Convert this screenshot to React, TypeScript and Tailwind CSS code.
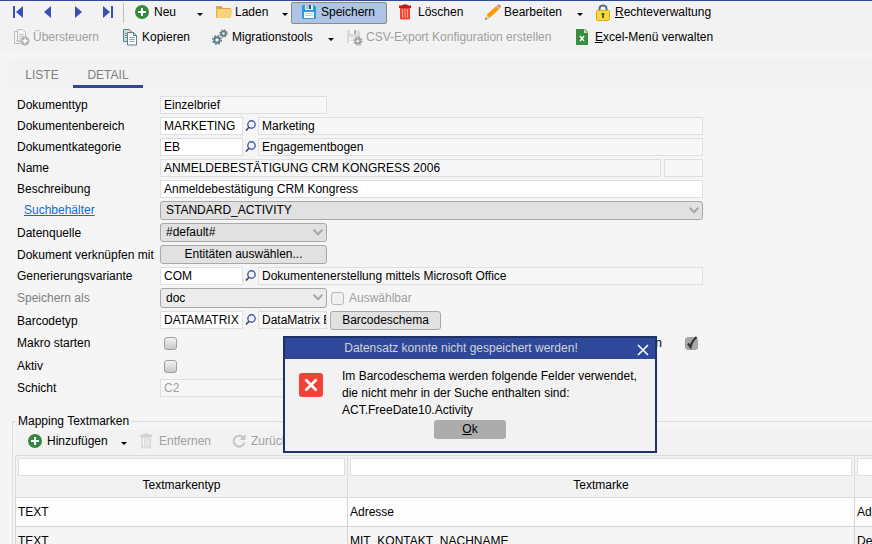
import React from 'react';

const NavIcon = ({ kind }: { kind: 'first' | 'prev' | 'next' | 'last' }) => (
  <svg width="12" height="12" viewBox="0 0 12 12" fill="#3a4fb8">
    {kind === 'first' && <path d="M1 0h2v12H1zM11 0v12L4 6z" />}
    {kind === 'prev' && <path d="M9 0v12L2 6z" />}
    {kind === 'next' && <path d="M3 0v12l7-6z" />}
    {kind === 'last' && <path d="M9 0h2v12H9zM1 0v12l7-6z" />}
  </svg>
);

const PlusIcon = () => (
  <svg width="16" height="16" viewBox="0 0 16 16">
    <circle cx="8" cy="8" r="7" fill="#338a3e" />
    <path d="M7 4h2v3h3v2H9v3H7V9H4V7h3z" fill="#fff" />
  </svg>
);

const FolderIcon = () => (
  <svg width="18" height="16" viewBox="0 0 18 16">
    <path d="M1 3a1 1 0 0 1 1-1h4l2 2h7a1 1 0 0 1 1 1v8H1z" fill="#e2a63c" />
    <path d="M1 14V6h1l1-1h13a1 1 0 0 1 1 1v1l-1 6a1 1 0 0 1-1 1z" fill="#f9d27c" />
    <path d="M1 14V4h1v9z" fill="#e5b04e" />
  </svg>
);

const FloppyIcon = () => (
  <svg width="16" height="16" viewBox="0 0 16 16">
    <path d="M1 2a1 1 0 0 1 1-1h11l2 2v11a1 1 0 0 1-1 1H2a1 1 0 0 1-1-1z" fill="#2f97dc" />
    <path d="M4 1h8v5H4z" fill="#e4eef2" />
    <path d="M5 1h5v4H5z" fill="#a9c2cf" />
    <path d="M8 1h2v4H8z" fill="#285e7c" />
    <path d="M3 8h10v6H3z" fill="#fff" />
    <path d="M4 9.500h8M4 11.500h8" stroke="#c4ccd0" />
  </svg>
);

const TrashIcon = ({ muted }: { muted?: boolean }) => (
  <svg width="14" height="16" viewBox="0 0 14 16">
    <path d="M1 1.500h3l1-1h4l1 1h3v2.500H1z" fill={muted ? '#d3d3d3' : '#b71c1c'} />
    <path d="M2 4h10v10.500a1 1 0 0 1-1 1H3a1 1 0 0 1-1-1z" fill={muted ? '#dcdcdc' : '#f44336'} />
    <path d="M4.500 5v8.500M7 5v8.500M9.500 5v8.500" stroke={muted ? '#f5f5f5' : '#ffab91'} />
  </svg>
);

const PencilIcon = () => (
  <svg width="18" height="17" viewBox="0 0 18 17">
    <path d="M1 16l1.500-4.500L5 14z" fill="#37474f" />
    <path d="M2 13l1-3 3 3.500-3.500 1.500z" fill="#ffd9a0" />
    <path d="M2.800 10.500L12 2.300l3 3L5.500 14z" fill="#ff9800" />
    <path d="M12 2.300l1.300-1.100 3 3L15 5.300z" fill="#b0bec5" />
    <path d="M13.300 1.200c1-1 2-.9 2.800-.1s1 2 .2 3.100z" fill="#e57373" />
  </svg>
);

const LockIcon = () => (
  <svg width="16" height="17" viewBox="0 0 16 17">
    <path d="M4.500 7V4.500a3.500 3 0 0 1 7 0V7" fill="none" stroke="#546e7a" strokeWidth="2" />
    <rect x="1.500" y="6.500" width="13" height="10" rx="1" fill="#fdd835" stroke="#d9ad1f" />
    <path d="M6.500 9h3v2H9v3H7v-3h-.500z" fill="#455a64" />
  </svg>
);

const OverrideIcon = () => (
  <svg width="17" height="17" viewBox="0 0 17 17">
    <path d="M4 2.500H1.500v12H8M4.500 .500h5l3 3v9h-8z" fill="#f4f4f4" stroke="#bdbdbd" />
    <path d="M6 5.500h5M6 7.500h5M3 11.500h4M6 9.500h3" stroke="#c8c8c8" />
    <circle cx="12" cy="12" r="4.500" fill="#b4b4b4" />
    <path d="M12 9.500v5M9.500 12h5" stroke="#fff" strokeWidth="1.500" />
  </svg>
);

const CopyIcon = () => (
  <svg width="16" height="17" viewBox="0 0 16 17">
    <path d="M1.500 .500h6l3 3v9h-9z" fill="#cfd8dc" stroke="#607d8b" />
    <path d="M5.500 3.500h6l3 3v9.500h-9z" fill="#f7fafb" stroke="#607d8b" />
    <path d="M11.500 3.500v3h3" fill="none" stroke="#607d8b" />
    <path d="M7.500 8.500h5M7.500 10.500h5M7.500 12.500h5" stroke="#90a4ae" />
    <path d="M3 4.500h1.500M3 6.500h1.500M3 8.500h1.500" stroke="#607d8b" />
  </svg>
);

const GearsIcon = () => (
  <svg width="16" height="16" viewBox="0 0 16 16" fill="none" stroke="#607d8b">
    <circle cx="5" cy="11" r="2.700" strokeWidth="2" />
    <circle cx="5" cy="11" r="4.300" strokeWidth="1.400" strokeDasharray="1.800 1.580" />
    <circle cx="11.500" cy="4.500" r="2.200" strokeWidth="1.800" />
    <circle cx="11.500" cy="4.500" r="3.500" strokeWidth="1.400" strokeDasharray="1.500 1.250" />
  </svg>
);

const CsvIcon = () => (
  <svg width="17" height="17" viewBox="0 0 17 17">
    <path d="M1 1h11l2 2v11H1z" fill="#d9d9d9" />
    <path d="M4 1h7v4H4z" fill="#f3f3f3" />
    <path d="M8 1h2v4H8z" fill="#b0b0b0" />
    <path d="M3 8h9v6H3z" fill="#fafafa" />
    <path d="M4 9.500h6M4 11.500h5" stroke="#dedede" />
    <circle cx="12" cy="12" r="2.500" fill="none" stroke="#a4a4a4" strokeWidth="2" />
    <circle cx="12" cy="12" r="4" fill="none" stroke="#a4a4a4" strokeWidth="1.400" strokeDasharray="1.700 1.440" />
  </svg>
);

const ExcelIcon = () => (
  <svg width="14" height="16" viewBox="0 0 14 16">
    <path d="M1 0h9l3 3v13H1z" fill="#388e3c" />
    <path d="M9 0l4 4H9z" fill="#c8e6c9" />
    <path d="M5 7l4 5M9 7l-4 5" stroke="#fff" strokeWidth="1.400" />
  </svg>
);

const ReloadIcon = () => (
  <svg width="16" height="16" viewBox="0 0 16 16">
    <path d="M12 4.200A5.500 5.500 0 1 0 13.500 9.500" fill="none" stroke="#c6c6c6" strokeWidth="2" />
    <path d="M14.500 1v6h-6z" fill="#c6c6c6" />
  </svg>
);

const ErrorIcon = () => (
  <svg width="24" height="24" viewBox="0 0 24 24">
    <rect width="24" height="24" rx="3" fill="#f44336" />
    <path d="M6.500 6.500l11 11M17.500 6.500l-11 11" stroke="#fff" strokeWidth="2.600" />
  </svg>
);

const Caret = () => (
  <svg width="6" height="3" viewBox="0 0 6 3" className="mt-[5px]">
    <path d="M0 0h6L3 3z" fill="#000" />
  </svg>
);

type ToolProps = {
  icon: React.ReactNode;
  label: React.ReactNode;
  slot: string;
  muted?: boolean;
  menu?: boolean;
};

const Tool = ({ icon, label, slot, muted, menu }: ToolProps) => (
  <div className={`flex h-full shrink-0 items-center justify-between pb-[2px] ${slot}`}>
    <button
      type="button"
      disabled={muted}
      className={`flex items-center whitespace-nowrap ${muted ? 'text-[#a0a0a0]' : 'text-black'}`}
    >
      <span className="flex w-5 shrink-0">{icon}</span>
      {label}
    </button>
    {menu && (
      <button type="button" aria-label="Menü" className="flex w-[18px]">
        <Caret />
      </button>
    )}
  </div>
);

const Row = ({
  label,
  id,
  h = 'h-[18px]',
  muted,
  children,
}: {
  label: string;
  id: string;
  h?: string;
  muted?: boolean;
  children: React.ReactNode;
}) => (
  <div className={`flex items-center ${h}`}>
    <label htmlFor={id} className={`w-[143px] shrink-0 whitespace-nowrap ${muted ? 'text-[#808080]' : ''}`}>
      {label}
    </label>
    <div className="flex h-full min-w-0 flex-1 items-center gap-[3px]">{children}</div>
  </div>
);

const Field = ({
  id,
  value,
  name,
  size = 'min-w-0 flex-1',
  editable,
  muted,
}: {
  id?: string;
  value: string;
  name?: string;
  size?: string;
  editable?: boolean;
  muted?: boolean;
}) => (
  <input
    id={id}
    aria-label={name}
    defaultValue={value}
    readOnly={!editable}
    className={`h-[18px] border border-[#dfdfdf] pl-[3px] outline-none ${size} ${
      editable ? 'bg-white' : 'bg-[#f7f7f7]'
    } ${muted ? 'text-[#a0a0a0]' : ''}`}
  />
);

const Lookup = ({ id, code, text, textSize }: { id: string; code: string; text: string; textSize?: string }) => (
  <div className="flex min-w-0 flex-1 items-center">
    <Field id={id} value={code} size="w-[83px]" editable />
    <button type="button" aria-label="Suchen" className="flex w-[15px] shrink-0 justify-center pb-[2px]">
      <svg width="11" height="11" viewBox="0 0 11 11" fill="none">
        <circle cx="6.500" cy="4.500" r="3.700" stroke="#4656b8" strokeWidth="1.400" />
        <path d="M4 7.300L1 10.500" stroke="#38424a" strokeWidth="1.500" />
      </svg>
    </button>
    <Field name={`${code} Text`} value={text} size={textSize} />
  </div>
);

const Select = ({ id, value, size, tone }: { id: string; value: string; size: string; tone: string }) => (
  <div className={`relative h-full ${size}`}>
    <select
      id={id}
      defaultValue={value}
      className={`block h-full w-full appearance-none rounded-[3px] border border-[#a8a8a8] pb-px pl-[5px] outline-none ${tone}`}
    >
      <option>{value}</option>
    </select>
    <svg width="10" height="7" viewBox="0 0 10 7" className="pointer-events-none absolute top-[6px] right-[4px]">
      <path d="M.700 .700L5 5.300 9.300 .700" fill="none" stroke="#a8a8a8" strokeWidth="2" />
    </svg>
  </div>
);

const FormButton = ({ id, size, children }: { id?: string; size: string; children: React.ReactNode }) => (
  <button
    id={id}
    type="button"
    className={`h-[19px] shrink-0 rounded-[3px] border border-[#a8a8a8] bg-[#e1e1e1] pb-px ${size}`}
  >
    {children}
  </button>
);

const Check = ({ id, checked, faint }: { id: string; checked?: boolean; faint?: boolean }) => (
  <span className="relative flex h-[13px] w-[13px] shrink-0">
    <input
      id={id}
      type="checkbox"
      defaultChecked={checked}
      className={`h-[13px] w-[13px] appearance-none rounded-[3px] border ${
        checked
          ? 'border-[#a4a4a4] bg-[#a8a8a8]'
          : faint
            ? 'border-[#b8b8b8] bg-[#f0f0f0]'
            : 'border-[#a0a0a0] bg-linear-to-b from-[#f2f2f2] to-[#c8c8c8]'
      }`}
    />
    {checked && (
      <svg width="13" height="14" viewBox="0 0 13 14" className="pointer-events-none absolute bottom-0 left-0">
        <path d="M3 7.500l2.500 3.500C6.500 7 8.500 3.500 11.500 1" fill="none" stroke="#333" strokeWidth="2.200" />
      </svg>
    )}
  </span>
);

const columns = ['Textmarkentyp', 'Textmarke', 'Beschreibung'];
const rows = [
  ['TEXT', 'Adresse', 'Adresse'],
  ['TEXT', 'MIT_KONTAKT_NACHNAME', 'Der Nachname'],
];

export default function App() {
  return (
    <div className="relative flex h-screen flex-col overflow-hidden bg-[#f5f5f5] font-['Liberation_Sans',Arial,sans-serif] text-[12px] leading-[14px] text-black">
      <header className="h-[51px] shrink-0 border-t border-[#2f4899] bg-[#f2f2f2] pl-px">
        <div className="flex h-6 items-center">
          <nav aria-label="Datensätze" className="flex w-[122px] shrink-0 items-center justify-between pr-[9px] pb-[2px] pl-[11px]">
            <button type="button" aria-label="Erster"><NavIcon kind="first" /></button>
            <button type="button" aria-label="Vorheriger"><NavIcon kind="prev" /></button>
            <button type="button" aria-label="Nächster"><NavIcon kind="next" /></button>
            <button type="button" aria-label="Letzter"><NavIcon kind="last" /></button>
          </nav>
          <div className="mr-[10px] h-5 w-px shrink-0 bg-[#c0c0c0]" />
          <Tool icon={<PlusIcon />} label="Neu" slot="w-[81px]" menu />
          <Tool icon={<FolderIcon />} label="Laden" slot="w-[85px]" menu />
          <button
            type="button"
            className="-ml-[9px] mr-[11px] flex h-[22px] w-24 shrink-0 items-center rounded-[2px] border border-[#8a8a8a] bg-[#adc4e4] pb-[2px] pl-[9px]"
          >
            <span className="flex w-5 shrink-0"><FloppyIcon /></span>
            Speichern
          </button>
          <Tool icon={<TrashIcon />} label="Löschen" slot="w-[86px]" />
          <Tool icon={<PencilIcon />} label="Bearbeiten" slot="w-[111px]" menu />
          <Tool icon={<LockIcon />} label={<span><u>R</u>echteverwaltung</span>} slot="w-[130px]" />
        </div>
        <div className="flex h-[26px] items-center pl-3">
          <Tool icon={<OverrideIcon />} label="Übersteuern" slot="w-[109px]" muted />
          <Tool icon={<CopyIcon />} label="Kopieren" slot="w-[90px]" />
          <Tool icon={<GearsIcon />} label="Migrationstools" slot="w-[134px]" menu />
          <Tool icon={<CsvIcon />} label="CSV-Export Konfiguration erstellen" slot="w-[229px]" muted />
          <Tool icon={<ExcelIcon />} label={<span><u>E</u>xcel-Menü verwalten</span>} slot="w-[150px]" />
        </div>
      </header>

      <div role="tablist" className="mt-2 ml-[9px] flex h-[29px] shrink-0 bg-[#f2f2f2] text-[#808080]">
        <button type="button" role="tab" aria-selected="false" className="w-16 border-b-[3px] border-transparent pt-[6px] pl-[2px]">
          LISTE
        </button>
        <button type="button" role="tab" aria-selected="true" className="w-[70px] border-b-[3px] border-[#2f4899] pt-[6px]">
          DETAIL
        </button>
      </div>

      <form className="mt-2 ml-[17px] flex w-full max-w-[686px] shrink-0 flex-col gap-[3px]">
        <Row label="Dokumenttyp" id="typ">
          <Field id="typ" value="Einzelbrief" size="w-[167px]" />
        </Row>
        <Row label="Dokumentenbereich" id="bereich">
          <Lookup id="bereich" code="MARKETING" text="Marketing" />
        </Row>
        <Row label="Dokumentkategorie" id="kategorie">
          <Lookup id="kategorie" code="EB" text="Engagementbogen" />
        </Row>
        <Row label="Name" id="name">
          <Field id="name" value="ANMELDEBESTÄTIGUNG CRM KONGRESS 2006" />
          <Field name="Zusatz" value="" size="w-[39px]" />
        </Row>
        <Row label="Beschreibung" id="beschreibung">
          <Field id="beschreibung" value="Anmeldebestätigung CRM Kongress" editable />
        </Row>
        <div className="flex h-[19px] items-center">
          <a href="#suchbehaelter" className="w-[143px] shrink-0 pb-px pl-[7px] text-[#1a68c8] underline">
            Suchbehälter
          </a>
          <Select id="suchbehaelter" value="STANDARD_ACTIVITY" size="flex-1" tone="bg-[#e1e1e1]" />
        </div>
        <Row label="Datenquelle" id="quelle" h="h-[19px]">
          <Select id="quelle" value="#default#" size="w-[167px]" tone="bg-[#e1e1e1]" />
        </Row>
        <Row label="Dokument verknüpfen mit" id="entitaeten" h="h-[19px]">
          <FormButton id="entitaeten" size="w-[167px]">Entitäten auswählen...</FormButton>
        </Row>
        <Row label="Generierungsvariante" id="variante">
          <Lookup id="variante" code="COM" text="Dokumentenerstellung mittels Microsoft Office" />
        </Row>
        <Row label="Speichern als" id="format" h="h-5" muted>
          <Select id="format" value="doc" size="w-[167px]" tone="bg-[#ececec]" />
          <div className="flex items-center gap-[5px] pl-px text-[#a0a0a0]">
            <Check id="auswaehlbar" faint />
            <label htmlFor="auswaehlbar">Auswählbar</label>
          </div>
        </Row>
        <Row label="Barcodetyp" id="barcode" h="h-[19px]">
          <div className="flex w-[167px] shrink-0 self-start">
            <Lookup id="barcode" code="DATAMATRIX" text="DataMatrix ECC200" textSize="w-[69px]" />
          </div>
          <FormButton size="w-[111px]">Barcodeschema</FormButton>
        </Row>
        <Row label="Makro starten" id="makro" h="h-5">
          <div className="flex flex-1 items-center justify-between pr-[5px] pl-1">
            <Check id="makro" />
            <span className="flex items-center gap-[23px]">
              <label htmlFor="option">n</label>
              <Check id="option" checked />
            </span>
          </div>
        </Row>
        <Row label="Aktiv" id="aktiv" h="h-5">
          <div className="flex pl-1">
            <Check id="aktiv" />
          </div>
        </Row>
        <Row label="Schicht" id="schicht">
          <Field id="schicht" value="C2" size="w-[167px]" muted />
        </Row>
      </form>

      <fieldset className="mt-[17px] -mr-1 ml-3 min-w-0 shrink-0 border border-[#dcdcdc] pl-[2px]">
        <legend className="ml-px px-[2px]">Mapping Textmarken</legend>
        <div className="mt-[2px] flex h-[25px] items-center bg-[#f2f2f2] pb-px pl-3">
          <Tool icon={<PlusIcon />} label="Hinzufügen" slot="w-[112px]" menu />
          <Tool icon={<TrashIcon muted />} label="Entfernen" slot="w-[92px]" muted />
          <Tool icon={<ReloadIcon />} label="Zurücksetzen" slot="w-[100px]" muted />
        </div>
        <div className="overflow-hidden">
          <table className="w-[1100px] table-fixed border-collapse">
            <colgroup>
              <col className="w-[332px]" />
              <col className="w-[507px]" />
              <col />
            </colgroup>
            <thead>
              <tr>
                {columns.map((c) => (
                  <th key={c} className="h-[42px] border border-[#dcdcdc] bg-[#f2f2f2] px-[2px] pt-[2px] align-top font-normal">
                    <input
                      aria-label={`${c} filtern`}
                      className="block h-[18px] w-full border border-[#dfdfdf] bg-white px-[3px] outline-none"
                    />
                    <div className="pt-[2px]">{c}</div>
                  </th>
                ))}
              </tr>
            </thead>
            <tbody>
              {rows.map((r, i) => (
                <tr key={r[1]} className={i % 2 ? 'bg-[#f5f5f5]' : 'bg-[#fdfdfd]'}>
                  {r.map((cell, j) => (
                    <td key={j} className="h-[29px] border border-[#d4d4d4] px-[2px]">
                      {cell}
                    </td>
                  ))}
                </tr>
              ))}
            </tbody>
          </table>
        </div>
      </fieldset>

      <section
        role="alertdialog"
        aria-labelledby="dlg-title"
        className="absolute top-[336px] left-[283px] h-[117px] w-[374px] border-2 border-[#1f3268] bg-[#f2f2f2]"
      >
        <div className="flex h-[21px] items-center bg-[#2f4899] pr-[6px] text-[#d0d4da]">
          <h2 id="dlg-title" className="flex-1 pb-px text-center">Datensatz konnte nicht gespeichert werden!</h2>
          <button type="button" aria-label="Schließen" className="pt-[2px]">
            <svg width="12" height="12" viewBox="0 0 12 12">
              <path d="M1 1l10 10M11 1L1 11" stroke="#fff" strokeWidth="1.600" />
            </svg>
          </button>
        </div>
        <div className="flex gap-[19px] pt-[9px] pl-[14px]">
          <div className="pt-[5px]"><ErrorIcon /></div>
          <p className="leading-[17px] whitespace-nowrap">
            Im Barcodeschema werden folgende Felder verwendet,
            <br />
            die nicht mehr in der Suche enthalten sind:
            <br />
            ACT.FreeDate10.Activity
          </p>
        </div>
        <div className="flex justify-center pt-px">
          <button type="button" className="h-[19px] w-[72px] rounded-[3px] bg-[#acacac] pb-px">
            <u>O</u>k
          </button>
        </div>
      </section>
    </div>
  );
}
